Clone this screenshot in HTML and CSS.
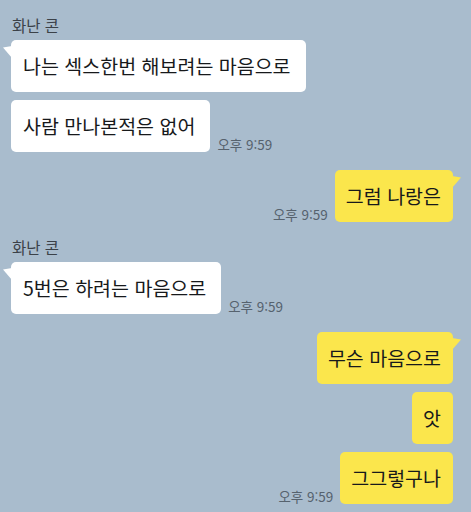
FILE: index.html
```html
<!DOCTYPE html>
<html lang="ko">
<head>
<meta charset="utf-8">
<link rel="stylesheet" href="styles.css">
</head>
<body>
<div class="chat">
  <div class="name">화난 콘</div>
  <div class="row">
    <div class="bubble you tail">나는 섹스한번 해보려는 마음으로</div>
  </div>
  <div class="row tight">
    <div class="bubble you">사람 만나본적은 없어</div>
    <span class="time">오후 9:59</span>
  </div>
  <div class="row me gap">
    <span class="time">오후 9:59</span>
    <div class="bubble mine tail">그럼 나랑은</div>
  </div>
  <div class="name name2">화난 콘</div>
  <div class="row">
    <div class="bubble you tail">5번은 하려는 마음으로</div>
    <span class="time">오후 9:59</span>
  </div>
  <div class="row me gap">
    <div class="bubble mine tail">무슨 마음으로</div>
  </div>
  <div class="row me tight">
    <div class="bubble mine">앗</div>
  </div>
  <div class="row me tight">
    <span class="time">오후 9:59</span>
    <div class="bubble mine">그그렇구나</div>
  </div>
</div>
</body>
</html>
```
FILE: styles.css
```css
html, body {
  margin: 0;
  padding: 0;
  background: #a9bccd;
}
body {
  font-family: "Noto Sans CJK KR", "Noto Sans", sans-serif;
  color: #17191b;
}
.chat {
  padding: 17px 18px 0 11px;
}
.name {
  font-size: 15.5px;
  line-height: 17px;
  color: #3b4148;
  padding-left: 1px;
  margin-bottom: 6px;
}
.name2 {
  margin-top: 17px;
}
.row {
  display: flex;
  align-items: flex-end;
  gap: 7px;
}
.row.tight {
  margin-top: 8px;
}
.row.gap {
  margin-top: 18px;
}
.row.me {
  justify-content: flex-end;
}
.bubble {
  position: relative;
  height: 52px;
  display: flex;
  align-items: center;
  padding: 0 15px 0 12px;
  border-radius: 5px;
  font-size: 19.5px;
  line-height: 24px;
  white-space: nowrap;
}
.bubble.you {
  background: #ffffff;
}
.bubble.mine {
  background: #fbe64c;
  padding: 0 12px 0 11px;
}
.bubble.tail::before {
  content: "";
  position: absolute;
  top: 6px;
  width: 9px;
  height: 12px;
}
.bubble.you.tail::before {
  left: -8px;
  background: #ffffff;
  clip-path: polygon(100% 0, 0 12%, 100% 100%);
}
.bubble.mine.tail::before {
  right: -8px;
  background: #fbe64c;
  clip-path: polygon(0 0, 100% 12%, 0 100%);
}
.time {
  font-size: 13.5px;
  line-height: 15px;
  color: #56626e;
  white-space: nowrap;
}
```
